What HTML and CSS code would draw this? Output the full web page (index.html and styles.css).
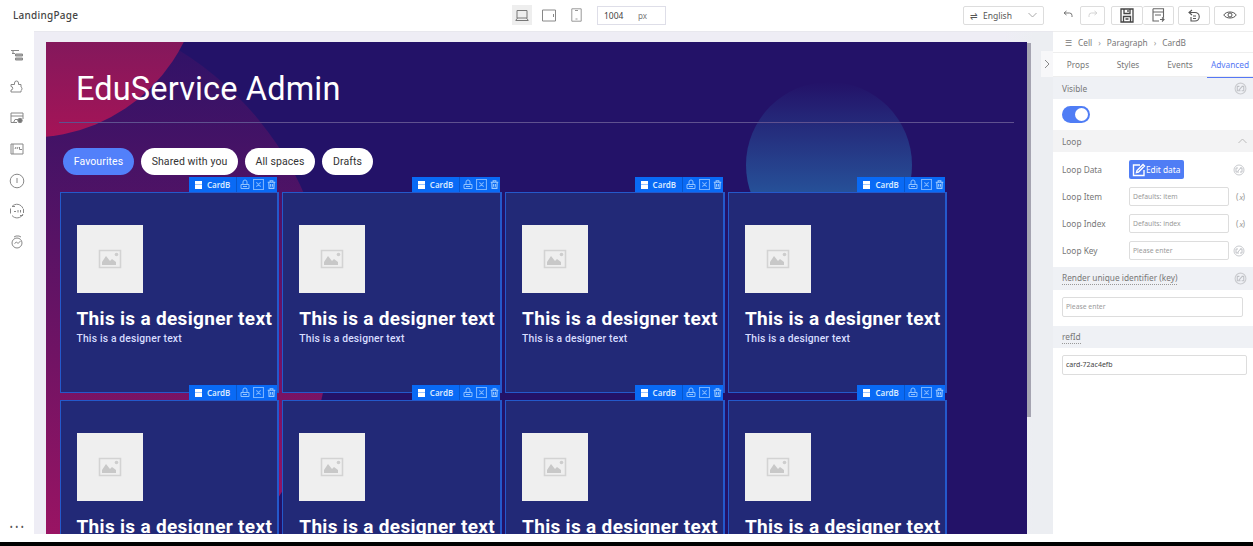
FILE: index.html
```html
<!DOCTYPE html>
<html lang="en">
<head>
<meta charset="utf-8">
<title>LandingPage</title>
<link rel="stylesheet" href="styles.css">
</head>
<body>
<svg class="defs" width="0" height="0">
  <symbol id="picture" viewBox="0 0 24 20"><path d="M1.5 1.5h21v17h-21z" fill="none" stroke="#d3d3d3" stroke-width="1.6"/><path d="M4 16V13l4-6 4 5 2-2 4 3v3z" fill="#c8c8c8"/><circle cx="18.5" cy="5.5" r="1.8" fill="#cdcdcd"/></symbol>
  <symbol id="lock" viewBox="0 0 10 10"><path d="M1 5h8v4H1zM3 5V2.500a2 2 0 0 1 4 0V5M3 7h4" fill="none" stroke="#8fc1ff" stroke-width="1"/></symbol>
  <symbol id="copy" viewBox="0 0 10 10"><path d="M.5.5h9v9h-9zM3 3l4 4M7 3L3 7" fill="none" stroke="#78b2ff" stroke-width="1"/></symbol>
  <symbol id="trash" viewBox="0 0 10 10"><path d="M.8 2.500h8.400M3.500 2.500V.8h3v1.700M2 2.500l.3 6.800h5.400L8 2.500M4 4.500v3M6 4.500v3" fill="none" stroke="#9ccaff" stroke-width="1.200"/></symbol>
  <symbol id="link" viewBox="0 0 12 12"><circle cx="6" cy="6" r="5" fill="none" stroke="#c9cbcf" stroke-width="1"/><path d="M5 4H3v4h3M7 8h2V4H7M4.500 7.500l3.500-4" fill="none" stroke="#bfc1c6" stroke-width="1"/></symbol>
</svg>
<div class="app">
  <header class="topbar">
    <div class="page-name">LandingPage</div>
    <div class="devices">
      <span class="device active"><svg width="14" height="13" viewBox="0 0 14 13"><path d="M2 1.500h10v7.500H2zM.5 11.500h13M2.500 9L1 11M11.500 9L13 11" fill="none" stroke="#777"/></svg></span>
      <span class="device"><svg width="14" height="13" viewBox="0 0 14 13"><path d="M.5 1h13v11H.5zM11.500 5v3" fill="none" stroke="#888"/></svg></span>
      <span class="device"><svg width="11" height="14" viewBox="0 0 11 14"><path d="M.8.800h9.400v12.400H.8zM4 2.500h3M4.500 11h2" fill="none" stroke="#999"/></svg></span>
      <span class="size"><b>1004</b><i>px</i></span>
    </div>
    <div class="lang"><span>⇌</span><span class="lang-name">English</span><svg width="9" height="6" viewBox="0 0 9 6"><path d="M.5 1l4 4 4-4" fill="none" stroke="#aaa"/></svg></div>
    <div class="tools">
      <span class="tool bare"><svg width="10" height="10" viewBox="0 0 10 10"><path d="M3.500 1L1 3l2.500 2M1 3h5.500a2.500 2.500 0 0 1 2.500 2.500V7" fill="none" stroke="#777"/></svg></span>
      <span class="tool redo"><svg width="10" height="10" viewBox="0 0 10 10"><path d="M6.500 1L9 3 6.500 5M9 3H3.500A2.500 2.500 0 0 0 1 5.500V7" fill="none" stroke="#d4d4d4"/></svg></span>
      <span class="tool save"><svg width="14" height="15" viewBox="0 0 14 15"><path d="M1 1h12V14H1zM4 1v4.500h6V1M3.500 14V8.500h7V14M8 2v2M5.500 11h3" fill="none" stroke="#444" stroke-width="1.300"/></svg></span>
      <span class="tool saveas"><svg width="13" height="14" viewBox="0 0 13 14"><path d="M1 .8h10.500v9M7 13H1V.8M1 4h10.500M3 7h6M8 11.500h4M10 9.500l2 2-2 2" fill="none" stroke="#666" stroke-width="1.100"/></svg></span>
      <span class="tool refresh"><svg width="13" height="13" viewBox="0 0 13 13"><path d="M4 1L1 3.500 4 6M1 3.500h6a4 4 0 0 1 0 8.500H3V8M5 7h3M5 9.500h3" fill="none" stroke="#555" stroke-width="1.100"/></svg></span>
      <span class="tool preview"><svg width="14" height="10" viewBox="0 0 14 10"><path d="M.8 5C3 1 11 1 13.200 5 11 9 3 9 .8 5z" fill="none" stroke="#555"/><circle cx="7" cy="5" r="2" fill="none" stroke="#555"/></svg></span>
    </div>
  </header>
  <div class="workspace">
    <nav class="rail">
      <svg width="14" height="14" viewBox="0 0 14 14"><path d="M1 1.500h8M2 4.500h3M3 2v2.500" /><path d="M5.500 5h7v2h-7zM5.500 9h7v2h-7z" fill="#aaa"/></svg>
      <svg width="14" height="14" viewBox="0 0 14 14"><path d="M1 4.500h3.500V3a2 2 0 0 1 4 0v1.500H11V7a2 2 0 0 1 0 3.500V12H1v-2a1.700 1.700 0 0 0 0-3.500z"/></svg>
      <svg width="14" height="14" viewBox="0 0 14 14"><path d="M1 2h12v6M7 11.500H1V2M1 5h12M3.500 11.500L5 8.500h3"/><circle cx="10" cy="9.500" r="2.200" fill="#777"/></svg>
      <svg width="14" height="14" viewBox="0 0 14 14"><path d="M1 2h12v10H1zM3 2v10M5 7l1-2M7 7l1-2M9.500 5v2.500H12"/></svg>
      <svg width="16" height="16" viewBox="0 0 16 16"><circle cx="8" cy="8" r="6.800"/><path d="M8 5v5"/></svg>
      <svg width="16" height="16" viewBox="0 0 16 16"><path d="M3 3.500a6.500 6.500 0 0 1 11 2M14 11a6.500 6.500 0 0 1-11 1.500M1.500 5.500v5M14.500 6v4M5 8.500h2M9 7v2.500M11.500 7v2.500M3 3.500h3M14 12.500h-3"/></svg>
      <svg width="14" height="14" viewBox="0 0 14 14"><circle cx="7" cy="8" r="5"/><path d="M4 2l2-1h3l2 1M4.500 8.500L6.500 7l1.500 1.500L10.500 6"/></svg>
      <span class="more">•••</span>
    </nav>
    <main class="stage">
      <div class="page">
        <svg class="backdrop" width="981" height="492" viewBox="46 42 981 492">
          <defs>
            <linearGradient id="plum" gradientUnits="userSpaceOnUse" x1="0" y1="40" x2="0" y2="600"><stop offset="0" stop-color="#a01460" stop-opacity=".1"/><stop offset="1" stop-color="#b01462" stop-opacity=".95"/></linearGradient>
            <linearGradient id="rose" gradientUnits="userSpaceOnUse" x1="0" y1="42" x2="0" y2="137"><stop offset="0" stop-color="#84185c"/><stop offset="1" stop-color="#a51457"/></linearGradient>
            <linearGradient id="sky" gradientUnits="userSpaceOnUse" x1="0" y1="82" x2="0" y2="192"><stop offset="0" stop-color="#285098" stop-opacity="0"/><stop offset="1" stop-color="#265098" stop-opacity="1"/></linearGradient>
          </defs>
          <circle cx="12" cy="322" r="319" fill="url(#plum)"/>
          <circle cx="30" cy="-34" r="171.500" fill="url(#rose)"/>
          <circle cx="829" cy="165" r="83" fill="url(#sky)"/>
        </svg>
        <div class="content">
          <h1>EduService Admin</h1>
          <div class="pills"><span class="pill on">Favourites</span><span class="pill wide">Shared with you</span><span class="pill mid">All spaces</span><span class="pill small">Drafts</span></div>
          <div class="cards" id="cards"></div>
        </div>
      </div>
      <span class="scroll"></span>
      <span class="collapse"><svg width="6" height="10" viewBox="0 0 6 10"><path d="M1 1l4 4-4 4" fill="none" stroke="#888"/></svg></span>
    </main>
    <aside class="panel">
      <div class="crumbs"><span>☰</span><span class="c1">Cell</span><span class="sep">›</span><span class="c2">Paragraph</span><span class="sep">›</span><span class="c3">CardB</span></div>
      <div class="tabs"><span>Props</span><span>Styles</span><span>Events</span><span class="current">Advanced</span></div>
      <div class="head visible"><span>Visible</span><svg width="13" height="13"><use href="#link"/></svg></div>
      <div class="switch-row"><span class="switch"></span></div>
      <div class="head loop"><span>Loop</span><svg class="chev" width="9" height="6" viewBox="0 0 9 6"><path d="M.5 5l4-4 4 4" fill="none" stroke="#bbb"/></svg></div>
      <div class="fields">
        <div class="field"><label>Loop Data</label><span class="edit"><svg width="14" height="14" viewBox="0 0 14 14"><path d="M12 7v5.500H1.500V2H8M4.500 9.500L5 7.500 11 1.500l1.500 1.500-6 6z" fill="none" stroke="#fff" stroke-width="1.400"/></svg>Edit data</span><svg width="12" height="12"><use href="#link"/></svg></div>
        <div class="field"><label>Loop Item</label><span class="input">Defaults: item</span><em>(𝑥)</em></div>
        <div class="field"><label>Loop Index</label><span class="input">Defaults: index</span><em>(𝑥)</em></div>
        <div class="field"><label>Loop Key</label><span class="input">Please enter</span><svg width="12" height="12"><use href="#link"/></svg></div>
      </div>
      <div class="head key"><span class="dotted">Render unique identifier (key)</span><svg width="13" height="13"><use href="#link"/></svg></div>
      <div class="block"><span class="input full short">Please enter</span></div>
      <div class="head ref"><span class="dotted">refId</span></div>
      <div class="block last"><span class="input full dark">card-72ac4efb</span></div>
    </aside>
  </div>
  <div class="bottom-line"></div>
</div>
<script src="cards.js"></script>
</body>
</html>
```
FILE: cards.js
```
const card = (caption) => `
  <article class="card">
    <div class="tag"><span class="tag-name"><i></i>CardB</span><svg width="10" height="11"><use href="#lock"/></svg><svg width="11" height="11"><use href="#copy"/></svg><svg width="9" height="11"><use href="#trash"/></svg></div>
    <div class="thumb"><svg width="24" height="20"><use href="#picture"/></svg></div>
    <h2>This is a designer text</h2>
    ${caption ? `<p>${caption}</p>` : ''}
  </article>`;
document.getElementById('cards').innerHTML =
  card('This is a designer text').repeat(4) + card('').repeat(4);
```
FILE: styles.css
```css
* { box-sizing: border-box; }
body { margin: 0; background: #fff; font-family: "Noto Sans", "Open Sans", sans-serif; color: #555; }
.defs { position: absolute; }
.app { width: 1253px; height: 546px; display: flex; flex-direction: column; overflow: hidden; }
.topbar { height: 31px; flex: none; display: flex; align-items: center; padding-bottom: 1px; }
.page-name { width: 512px; padding-left: 13px; font-size: 10px; font-weight: 500; letter-spacing: .25px; color: #444; }
.devices { width: 451px; display: flex; align-items: center; }
.device { width: 20px; height: 20px; margin-right: 7px; display: flex; align-items: center; justify-content: center; }
.device.active { background: #eee; }
.size { width: 69px; height: 19px; margin-left: 4px; padding-left: 6px; border: 1px solid #dedee8; display: flex; align-items: center; font-size: 8px; color: #444; }
.size b { width: 34px; font-weight: 400; font-size: 8.500px; }
.size i { font-style: normal; color: #777; }
.lang { width: 81px; height: 19px; padding: 0 6px; border: 1px solid #ddd; border-radius: 2px; display: flex; align-items: center; font-size: 8.500px; }
.lang-name { flex: 1; margin-left: 5px; }
.tools { display: flex; flex: 1; padding-left: 17px; }
.tool { height: 19px; border: 1px solid #ddd; border-radius: 2px; display: flex; align-items: center; justify-content: center; }
.bare { width: 13px; border: 0; margin-right: 6px; }
.redo { width: 25px; margin-right: 6px; }
.save { width: 32px; }
.saveas { width: 31px; border-left: 0; margin-right: 4px; }
.refresh { width: 32px; margin-right: 4px; }
.preview { width: 31px; }
.workspace { height: 503px; display: flex; flex: none; }
.rail { width: 34px; display: flex; flex-direction: column; align-items: center; gap: 17px; padding-top: 18px; }
.rail svg { flex: none; fill: none; stroke: #888; stroke-width: 1; }
.rail svg:nth-child(5) { margin-bottom: -3px; }
.rail svg:nth-child(6) { margin-bottom: -1px; }
.more { margin-top: auto; margin-bottom: 1px; padding-left: 2px; font-size: 8px; line-height: 12px; letter-spacing: 2.500px; color: #555; }
.stage { position: relative; width: 1019px; padding: 10px 0 0 12px; background: linear-gradient(90deg, #eeedf5 0 970px, #eceef2 1000px); border-top: 1px solid #e8e8ee; }
.page { position: relative; width: 981px; height: 492px; overflow: hidden; background: #231268; }
.backdrop { position: absolute; left: 0; top: 0; }
.content { position: relative; padding: 0 13px; }
h1 { margin: 0; height: 81px; padding: 26px 0 0 17px; border-bottom: 1px solid #5f518f; font: 400 32.500px/42px Roboto, sans-serif; letter-spacing: .15px; color: #fff; }
.pills { display: flex; gap: 7px; padding: 25px 0 0 4px; }
.pill { height: 27px; width: 71px; border-radius: 14px; background: #fff; display: flex; align-items: center; justify-content: center; font: 10.500px Roboto, sans-serif; letter-spacing: .1px; color: #333; }
.pill.on { background: #5280fa; color: #fff; }
.wide { width: 97px; }
.mid { width: 70px; }
.small { width: 51px; }
.cards { margin-top: 17px; display: grid; grid-template-columns: repeat(4, 219.500px); gap: 7px 3.300px; margin-left: .5px; }
.card { position: relative; height: 201px; padding: 32px 0 0 16px; background: #222977; border: 1px solid #2459cb; border-right-width: 2px; white-space: nowrap; }
.tag { position: absolute; right: 0; top: -16px; width: 88px; height: 15px; background: #096af5; display: flex; align-items: center; gap: 3px; font-size: 8px; font-weight: 600; color: #d8e9ff; }
.tag-name { width: 48px; height: 15px; padding-left: 6px; border-right: 1px solid #0757ce; display: flex; align-items: center; gap: 5px; }
.tag i { width: 7px; height: 8px; background: linear-gradient(#fff 3px, #9bc5ff 3px 4px, #fff 4px); }
.thumb { width: 66px; height: 68px; background: #efefef; display: flex; align-items: center; justify-content: center; }
h2 { margin: 14px 0 0; font: 700 19px/24px Roboto, sans-serif; letter-spacing: .32px; color: #fff; }
.card p { margin: 1px 0 0; font: 500 10.300px/13px Roboto, sans-serif; letter-spacing: .18px; color: #d8ddff; }
.scroll { position: absolute; left: 993px; top: 11px; width: 4px; height: 374px; background: #a5a4b1; }
.collapse { position: absolute; right: 0; top: 19px; width: 12px; height: 26px; background: #f7f7f9; display: flex; align-items: center; justify-content: center; }
.panel { width: 200px; border-top: 1px solid #eee; font-size: 8.300px; color: #777; overflow: hidden; }
.crumbs { height: 21px; display: flex; align-items: center; padding-left: 12px; border-bottom: 1px solid #eee; }
.c1 { margin-left: 6px; }
.sep { margin: 0 6px; color: #999; }
.tabs { height: 24px; display: grid; grid-template-columns: 50px 50px 54px 46px; text-align: center; line-height: 24px; border-bottom: 1px solid #eee; }
.current { color: #5577f5; border-bottom: 1px solid #5577f5; }
.head { display: flex; align-items: center; justify-content: space-between; padding: 0 6px 0 9px; background: #eff1f5; }
.visible { height: 22px; }
.switch-row { height: 31px; padding: 7px 0 0 9px; }
.switch { display: flex; width: 28px; height: 17px; padding: 2px; border-radius: 9px; background: #4f7df5; justify-content: flex-end; }
.switch::after { content: ""; width: 13px; height: 13px; border-radius: 50%; background: #fff; }
.loop { height: 22px; background: #f3f3f4; }
.fields { padding: 4px 0 3px 9px; }
.field { height: 27px; display: grid; grid-template-columns: 67px 100px 16px; align-items: center; }
.field > svg, .field > em { justify-self: end; font-style: normal; color: #999; }
.edit { width: 55px; height: 19px; border-radius: 2px; background: #4f7df5; color: #fff; display: flex; align-items: center; padding-left: 3px; white-space: nowrap; font-size: 8.300px; }
.input { height: 19px; border: 1px solid #ddd; border-radius: 2px; padding-left: 3px; line-height: 17px; font-size: 6.800px; color: #999; }
.key { height: 23px; }
.dotted { border-bottom: 1px dotted #999; line-height: 12px; }
.block { height: 36px; padding: 7px 6px 0 9px; }
.full { display: block; height: 20px; line-height: 18px; }
.short { width: 181px; }
.ref { height: 22px; }
.dark { color: #444; font-size: 7px; }
.bottom-line { height: 4px; margin-top: 8px; background: #000; flex: none; }
```
